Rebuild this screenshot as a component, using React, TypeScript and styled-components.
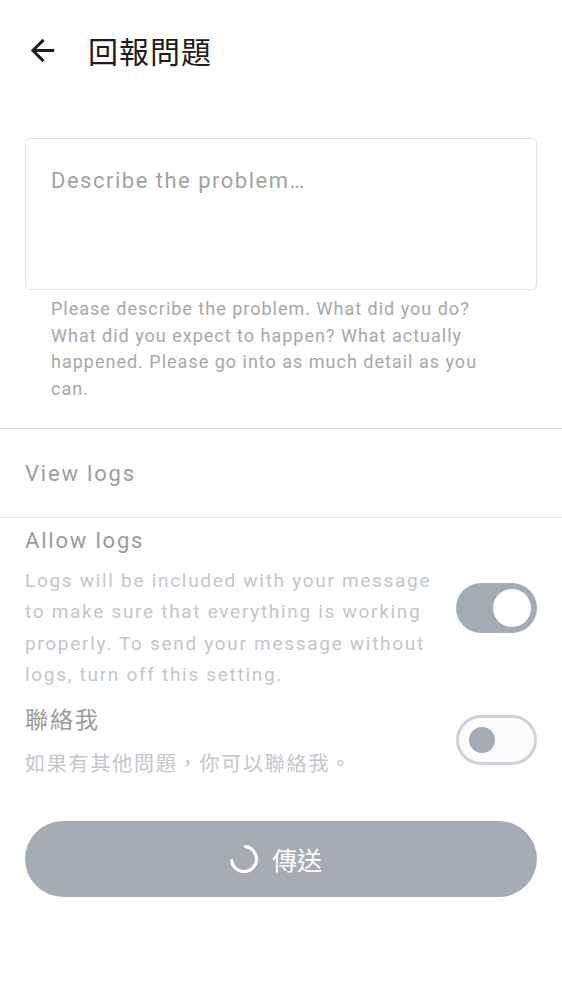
import React from "react";
import styled, { createGlobalStyle } from "styled-components";

const GlobalStyle = createGlobalStyle`
  body {
    margin: 0;
    background: #ffffff;
    font-family: Roboto, "Noto Sans CJK TC", sans-serif;
  }
`;

const ReportProblem = () => {
  return (
    <Page>
      <GlobalStyle />
      <Header>
        <BackButton aria-label="back">
          <svg width="35" height="35" viewBox="0 0 24 24" fill="#1c1c1c">
            <path d="M20 11H7.83l5.59-5.59L12 4l-8 8 8 8 1.41-1.41L7.83 13H20v-2z" />
          </svg>
        </BackButton>
        <Title>回報問題</Title>
      </Header>

      <Form>
        <TextBox placeholder="Describe the problem…" />
        <Helper>
          Please describe the problem. What did you do? What did you expect to
          happen? What actually happened. Please go into as much detail as you
          can.
        </Helper>
      </Form>

      <LinkRow>View logs</LinkRow>

      <Settings>
        <SettingRow>
          <SettingText>
            <SettingTitle>Allow logs</SettingTitle>
            <SettingDesc>
              Logs will be included with your message to make sure that
              everything is working properly. To send your message without
              logs, turn off this setting.
            </SettingDesc>
          </SettingText>
          <Toggle on>
            <Knob on />
          </Toggle>
        </SettingRow>
        <SettingRow>
          <SettingText cjk>
            <SettingTitle cjk>聯絡我</SettingTitle>
            <SettingDesc cjk>如果有其他問題，你可以聯絡我。</SettingDesc>
          </SettingText>
          <Toggle>
            <Knob />
          </Toggle>
        </SettingRow>
      </Settings>

      <SendButton>
        <svg width="32" height="32" viewBox="0 0 32 32" fill="none">
          <path
            d="M17.5 3.6 A12.5 12.5 0 1 1 3.6 17.5"
            stroke="#ffffff"
            strokeWidth="3"
            strokeLinecap="round"
          />
        </svg>
        <span>傳送</span>
      </SendButton>
    </Page>
  );
};

export default function App() {
  return <ReportProblem />;
}

const Page = styled.div`
  width: 562px;
  min-height: 1000px;
  background: #ffffff;
  display: flex;
  flex-direction: column;
`;

const Header = styled.div`
  height: 100px;
  display: flex;
  align-items: center;
  padding-left: 25px;
  gap: 28px;
`;

const BackButton = styled.div`
  width: 35px;
  height: 35px;
  display: flex;
  align-items: center;
  justify-content: center;
`;

const Title = styled.h1`
  margin: 0;
  font-family: "Noto Sans CJK TC", sans-serif;
  font-size: 30px;
  font-weight: 400;
  color: #1c1c1c;
  letter-spacing: 1px;
`;

const Form = styled.div`
  padding: 38px 25px 26px;
  border-bottom: 1px solid #d9dde2;
`;

const TextBox = styled.textarea`
  display: block;
  box-sizing: border-box;
  width: 100%;
  height: 152px;
  border: 1.5px solid #e2e2e2;
  border-radius: 5px;
  padding: 29px 25px;
  font-family: Roboto, sans-serif;
  font-size: 22px;
  letter-spacing: 1.5px;
  color: #333;
  resize: none;
  outline: none;
  &::placeholder {
    color: #a3a3a3;
  }
`;

const Helper = styled.p`
  margin: 6px 0 0;
  padding: 0 24px 0 26px;
  font-family: Roboto, sans-serif;
  font-size: 18px;
  line-height: 26.5px;
  letter-spacing: 1px;
  color: #a8a8a8;
`;

const LinkRow = styled.div`
  height: 88px;
  display: flex;
  align-items: center;
  padding: 0 25px;
  font-family: Roboto, sans-serif;
  font-size: 22px;
  letter-spacing: 1.8px;
  color: #9e9e9e;
  border-bottom: 1px solid #e6e6e6;
`;

const Settings = styled.div`
  padding: 7px 25px 0;
  display: flex;
  flex-direction: column;
  gap: 12px;
`;

const SettingRow = styled.div`
  display: flex;
  align-items: center;
`;

const SettingText = styled.div<{ cjk?: boolean }>`
  flex: 1;
  padding-right: 20px;
  display: flex;
  flex-direction: column;
  gap: ${(p) => (p.cjk ? "13px" : "8px")};
`;

const SettingTitle = styled.div<{ cjk?: boolean }>`
  font-family: ${(p) =>
    p.cjk ? `"Noto Sans CJK TC", sans-serif` : `Roboto, sans-serif`};
  font-size: ${(p) => (p.cjk ? "23px" : "22px")};
  line-height: 32px;
  color: #9b9b9b;
  letter-spacing: ${(p) => (p.cjk ? "2px" : "1.8px")};
`;

const SettingDesc = styled.div<{ cjk?: boolean }>`
  font-family: ${(p) =>
    p.cjk ? `"Noto Sans CJK TC", sans-serif` : `Roboto, sans-serif`};
  font-size: ${(p) => (p.cjk ? "20px" : "19px")};
  line-height: 31.3px;
  letter-spacing: ${(p) => (p.cjk ? "1.8px" : "1.7px")};
  color: #c3c6cb;
`;

const Toggle = styled.div<{ on?: boolean }>`
  flex: none;
  box-sizing: border-box;
  width: 81px;
  height: 50px;
  border-radius: 25px;
  display: flex;
  align-items: center;
  justify-content: ${(p) => (p.on ? "flex-end" : "flex-start")};
  padding: ${(p) => (p.on ? "0 6px" : "0 10px")};
  background: ${(p) => (p.on ? "#a5abb5" : "#fcfcfd")};
  border: ${(p) => (p.on ? "none" : "3px solid #cdd3da")};
`;

const Knob = styled.div<{ on?: boolean }>`
  width: ${(p) => (p.on ? "38px" : "26px")};
  height: ${(p) => (p.on ? "38px" : "26px")};
  border-radius: 50%;
  background: ${(p) => (p.on ? "#ffffff" : "#a5abb5")};
`;

const SendButton = styled.div`
  margin: 43px 25px 0;
  height: 76px;
  border-radius: 38px;
  background: #a6acb6;
  display: flex;
  align-items: center;
  justify-content: center;
  gap: 12px;
  color: #ffffff;
  font-family: "Noto Sans CJK TC", sans-serif;
  font-size: 25px;
  padding-right: 12px;
`;
